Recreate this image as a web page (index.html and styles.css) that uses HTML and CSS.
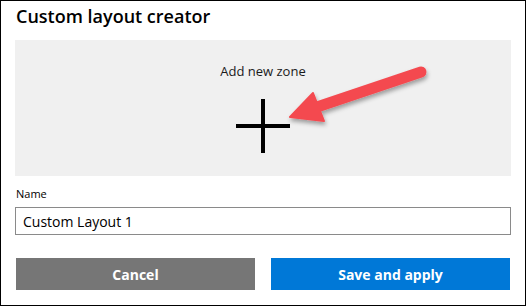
FILE: index.html
```html
<!DOCTYPE html>
<html lang="en">
<head>
    <meta charset="UTF-8">
    <title>Custom layout creator</title>
    <link rel="stylesheet" href="styles.css">
</head>
<body>
    <div class="dialog">
        <h1 class="dialog-title">Custom layout creator</h1>

        <div class="zone-area">
            <span class="zone-label">Add new zone</span>
            <svg class="zone-plus" width="54" height="54" viewBox="0 0 54 54">
                <line x1="27" y1="0" x2="27" y2="54" stroke="#000" stroke-width="4"/>
                <line x1="0" y1="27" x2="54" y2="27" stroke="#000" stroke-width="4"/>
            </svg>
        </div>

        <label class="field-label" for="layout-name">Name</label>
        <input id="layout-name" class="field-input" type="text" value="Custom Layout 1">

        <div class="actions">
            <button class="btn btn-cancel">Cancel</button>
            <button class="btn btn-primary">Save and apply</button>
        </div>

        <!-- annotation arrow drawn over the dialog -->
        <svg class="callout" width="526" height="306" viewBox="0 0 526 306">
            <defs>
                <filter id="arrow-shadow" x="-20%" y="-20%" width="140%" height="160%">
                    <feDropShadow dx="1" dy="3" stdDeviation="2" flood-color="#000" flood-opacity="0.35"/>
                </filter>
            </defs>
            <g filter="url(#arrow-shadow)" fill="#f44a50" stroke="#f44a50">
                <line x1="314" y1="108" x2="421" y2="72" stroke-width="11" stroke-linecap="round"/>
                <polygon points="290,117 313,93 324,121" stroke-width="2" stroke-linejoin="round"/>
            </g>
        </svg>
    </div>
</body>
</html>
```

FILE: styles.css
```css
html, body {
    margin: 0;
    padding: 0;
    background: #fff;
}

.dialog {
    position: relative;
    width: 526px;
    height: 306px;
    box-sizing: border-box;
    border: 1px solid #000;
    padding: 0 14px;
    display: flex;
    flex-direction: column;
    font-family: 'Open Sans', 'Noto Sans', sans-serif;
    color: #000;
}

.dialog-title {
    margin: 0;
    height: 39px;
    padding-top: 3px;
    box-sizing: border-box;
    font-size: 18px;
    font-weight: 600;
    line-height: 24px;
    padding-left: 1px;
}

.zone-area {
    height: 136px;
    background: #f0f0f0;
    display: flex;
    flex-direction: column;
    align-items: center;
    padding-top: 22px;
    box-sizing: border-box;
}

.zone-label {
    font-size: 13px;
    line-height: 18px;
    color: #1a1a1a;
}

.zone-plus {
    display: block;
    margin-top: 19px;
}

.field-label {
    margin-top: 10px;
    padding-left: 1px;
    font-size: 11px;
    line-height: 16px;
}

.field-input {
    margin-top: 5px;
    height: 28px;
    box-sizing: border-box;
    border: 1px solid #8a8a8a;
    padding: 0 7px;
    font-family: inherit;
    font-size: 14px;
    color: #000;
    outline: none;
}

.actions {
    display: flex;
    gap: 16px;
    margin-top: 23px;
    padding: 0 1px;
}

.btn {
    flex: 1;
    height: 32px;
    border: none;
    color: #fff;
    font-family: inherit;
    font-size: 14px;
    font-weight: 700;
    cursor: pointer;
}

.btn-cancel {
    background: #767676;
}

.btn-primary {
    background: #0078d7;
}

.callout {
    position: absolute;
    top: -1px;
    left: -1px;
    pointer-events: none;
}
```
